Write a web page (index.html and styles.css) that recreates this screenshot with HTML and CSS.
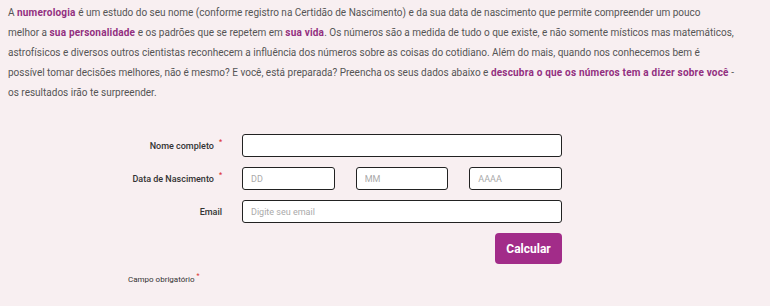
FILE: index.html
```html
<!DOCTYPE html>
<html lang="pt-BR">
<head>
<meta charset="utf-8">
<title>Numerologia</title>
<link rel="stylesheet" href="styles.css">
</head>
<body>
<div class="page">
  <p class="intro">A <strong>numerologia</strong> é um estudo do seu nome (conforme registro na Certidão de Nascimento) e da sua data de nascimento que permite compreender um pouco<br>melhor a <strong>sua personalidade</strong> e os padrões que se repetem em <strong>sua vida</strong>. Os números são a medida de tudo o que existe, e não somente místicos mas matemáticos,<br>astrofísicos e diversos outros cientistas reconhecem a influência dos números sobre as coisas do cotidiano. Além do mais, quando nos conhecemos bem é<br>possível tomar decisões melhores, não é mesmo? E você, está preparada? Preencha os seus dados abaixo e <strong>descubra o que os números tem a dizer sobre você</strong> -<br>os resultados irão te surpreender.</p>

  <form class="form">
    <label class="label" for="nome">Nome completo<sup class="req">*</sup></label>
    <input class="field" id="nome" type="text">

    <label class="label" for="dd">Data de Nascimento<sup class="req">*</sup></label>
    <div class="date">
      <input class="field" id="dd" type="text" placeholder="DD">
      <input class="field" type="text" placeholder="MM">
      <input class="field" type="text" placeholder="AAAA">
    </div>

    <label class="label" for="email">Email</label>
    <input class="field" id="email" type="email" placeholder="Digite seu email">

    <div class="actions">
      <button class="btn" type="button">Calcular</button>
    </div>
  </form>

  <div class="note">Campo obrigatório<sup class="req req-tight">*</sup></div>
</div>
</body>
</html>
```
FILE: styles.css
```css
html, body {
  margin: 0;
  padding: 0;
  background: #f8eff1;
}
body {
  font-family: Roboto, "Liberation Sans", Arial, sans-serif;
  color: #555;
}
.page {
  padding: 3px 8px 0 8px;
}
.intro {
  margin: 0;
  white-space: nowrap;
  font-size: 10px;
  line-height: 20px;
  color: #555;
}
.intro strong {
  color: #922f80;
  font-weight: 700;
  letter-spacing: 0.2px;
}
.form {
  margin-top: 31px;
  display: grid;
  grid-template-columns: 214px 320px;
  column-gap: 20px;
  row-gap: 10px;
  align-items: center;
}
.label {
  text-align: right;
  font-size: 9px;
  font-weight: 500;
  color: #333;
}
.req {
  color: #d33;
  font-size: 7px;
  vertical-align: top;
  position: relative;
  top: -3px;
  margin-left: 5px;
}
.req-tight {
  margin-left: 2px;
}
.field {
  box-sizing: border-box;
  height: 23px;
  width: 100%;
  border: 1px solid #222;
  border-radius: 3px;
  background: #fff;
  padding: 0 8px;
  font-family: Roboto, "Liberation Sans", Arial, sans-serif;
  font-size: 9px;
  color: #333;
  margin: 0;
}
.field::placeholder {
  color: #aaa;
}
.date {
  display: flex;
  gap: 21px;
}
.date .field {
  flex: 1;
  min-width: 0;
}
.actions {
  grid-column: 2;
  display: flex;
  justify-content: flex-end;
}
.btn {
  width: 67px;
  height: 31px;
  border: none;
  border-radius: 4px;
  background: #a22c89;
  color: #fff;
  font-family: Roboto, "Liberation Sans", Arial, sans-serif;
  font-weight: 700;
  font-size: 12px;
  padding: 0;
}
.note {
  margin: 11px 0 0 120px;
  font-size: 8px;
  color: #333;
}
```
